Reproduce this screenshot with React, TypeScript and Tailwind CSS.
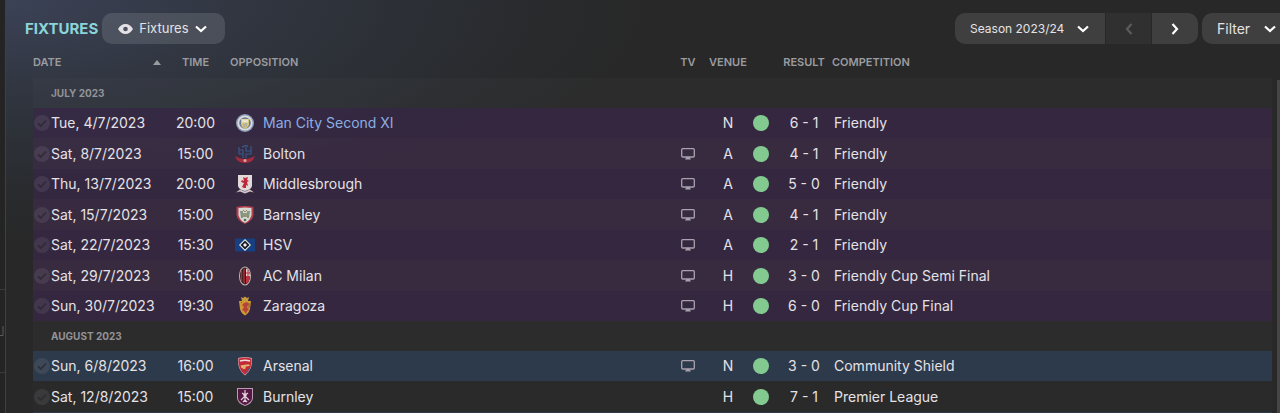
import type { ReactNode } from "react";
import { clsx } from "clsx";

type Fixture = {
  date: string;
  time: string;
  team: string;
  crest: ReactNode;
  tv: boolean;
  venue: "H" | "A" | "N";
  result: string;
  competition: string;
  kind: "friendly" | "cup" | "league";
  own?: boolean;
};

const CRESTS = {
  city: (
    <>
      <circle cx="10" cy="10" r="9" fill="#8e9db4" />
      <circle cx="10" cy="10" r="7.6" fill="#d9dce0" />
      <circle cx="10" cy="10" r="5.8" fill="#6a7a93" />
      <path d="M6 6h8v5q0 3-4 5-4-2-4-5z" fill="#d8c479" />
      <path d="M7 6.5h6v3H7z" fill="#e9e4cd" />
      <path d="M8 12l4-1.5M8 14l4-1.5" stroke="#93a9c4" />
    </>
  ),
  bolton: (
    <>
      <path d="M4 3v7h4V6H4M4 10h5M11 3v4h5V2M16 7v3h-5v4M8 11v3" stroke="#35598c" strokeWidth="1.2" fill="none" />
      <path d="M7 3q3-2 6-1" stroke="#40699d" fill="none" />
      <path d="M0 12l4 2q6 2 12 0l4-2-2 4q-3 3-8 3t-8-3z" fill="#a62c3d" />
      <circle cx="10" cy="16.500" r="1.600" fill="#d9a0a5" />
    </>
  ),
  boro: (
    <>
      <path d="M3 1h14v11q-1 4-7 5-6-1-7-5z" fill="#e2dada" />
      <path d="M8 3l2 1 3-1-1 3 2 1-2 1 1 4-2-1v3H9l-2-1 1-2 1-2-3-1 1-2 2 1z" fill="#bf2738" />
      <path d="M1 18.500l4-3 5 2 5-2 4 3-4-1-5 2-5-2z" fill="#d5c6c9" />
    </>
  ),
  barnsley: (
    <>
      <path d="M1.500 2q8.500-2 17 0v8q-1 6-8.500 9-7.500-3-8.500-9z" fill="#b3404c" />
      <path d="M3.500 3q6.500-1 13 0v7q-1 5-6.500 8-5.500-3-6.500-8z" fill="#d5d8d3" />
      <path d="M5 6h3v7H6zM12 6h3l-1 7h-2z" fill="#84958a" />
      <path d="M8 5l2 2 2-2M6 11h8" stroke="#a88347" fill="none" />
      <path d="M8 8h4v4H8z" fill="#8c9a7c" />
      <circle cx="10" cy="15" r="1.300" fill="#4f6c56" />
    </>
  ),
  hsv: (
    <>
      <path d="M0 3.500h20v13H0z" fill="#173f82" />
      <path d="M10 4l6 6-6 6-6-6z" fill="#f0efe9" />
      <path d="M10 5.500l4.500 4.500-4.500 4.500L5.500 10z" fill="#161b26" />
      <path d="M10 8l2 2-2 2-2-2z" fill="#f0efe9" />
    </>
  ),
  milan: (
    <>
      <ellipse cx="10" cy="10" rx="6" ry="9.500" fill="#c9b9b6" />
      <ellipse cx="10" cy="10" rx="5" ry="8.500" fill="#272025" />
      <path d="M6.500 4.500v11M9 2.500v15" stroke="#ba2733" strokeWidth="1.500" />
      <path d="M11 2.300q4 2 4 7.700h-4z" fill="#e2d8d5" />
      <path d="M11 10h4q0 6-4 7.700z" fill="#b53640" />
      <path d="M13 4v11M11 7h4" stroke="#c22b38" strokeWidth="1" />
    </>
  ),
  zaragoza: (
    <>
      <path d="M6 1l2 1 2-1.500L12 2l2-1-1 4H7z" fill="#c59a3d" />
      <path d="M4 5h12l-1 8q-1 4-5 6.500-4-2.500-5-6.500z" fill="#cf9a35" />
      <path d="M12 6l-3 1-2 2 2 2-2 3 2 1 2 3 1-3 2-1-2-3 2-3z" fill="#b8433a" />
      <path d="M6 6l1 1M14 7v5" stroke="#8d5b2c" />
    </>
  ),
  arsenal: (
    <>
      <path d="M3 2q7-2 14 0 1 12-7 17.500Q2 14 3 2z" fill="#cf9ba0" />
      <path d="M3.700 2.700q6.300-2 12.600 0 1 11-6.300 15.800Q2.700 13 3.700 2.700z" fill="#c32a37" />
      <path d="M5 5q5-1.500 10 0" stroke="#f0dcdc" strokeWidth="1.600" fill="none" />
      <path d="M5.500 9.500l6-1h3V10l-4 .5-1 1.500h-3z" fill="#e3bc7c" />
      <circle cx="9" cy="11.500" r="1.800" fill="#dfb06d" />
      <path d="M14.500 12l-4 5.500" stroke="#4b5d8e" />
    </>
  ),
  burnley: (
    <>
      <path d="M2 1h16v10q0 5-8 8-8-3-8-8z" fill="#b99bb5" />
      <path d="M3 2h14v9q0 4-7 7-7-3-7-7z" fill="#571743" />
      <path d="M10 3v12M7 6l3 2 3-2M6 13l4-4 4 4M8 15l2-2 2 2" stroke="#ddd0da" strokeWidth="1.200" fill="none" />
      <circle cx="10" cy="8" r="1.800" fill="#ddd0da" />
    </>
  ),
};

const MONTHS: { label: string; fixtures: Fixture[] }[] = [
  {
    label: "JULY 2023",
    fixtures: [
      { date: "Tue, 4/7/2023", time: "20:00", team: "Man City Second XI", crest: CRESTS.city, tv: false, venue: "N", result: "6 - 1", competition: "Friendly", kind: "friendly", own: true },
      { date: "Sat, 8/7/2023", time: "15:00", team: "Bolton", crest: CRESTS.bolton, tv: true, venue: "A", result: "4 - 1", competition: "Friendly", kind: "friendly" },
      { date: "Thu, 13/7/2023", time: "20:00", team: "Middlesbrough", crest: CRESTS.boro, tv: true, venue: "A", result: "5 - 0", competition: "Friendly", kind: "friendly" },
      { date: "Sat, 15/7/2023", time: "15:00", team: "Barnsley", crest: CRESTS.barnsley, tv: true, venue: "A", result: "4 - 1", competition: "Friendly", kind: "friendly" },
      { date: "Sat, 22/7/2023", time: "15:30", team: "HSV", crest: CRESTS.hsv, tv: true, venue: "A", result: "2 - 1", competition: "Friendly", kind: "friendly" },
      { date: "Sat, 29/7/2023", time: "15:00", team: "AC Milan", crest: CRESTS.milan, tv: true, venue: "H", result: "3 - 0", competition: "Friendly Cup Semi Final", kind: "friendly" },
      { date: "Sun, 30/7/2023", time: "19:30", team: "Zaragoza", crest: CRESTS.zaragoza, tv: true, venue: "H", result: "6 - 0", competition: "Friendly Cup Final", kind: "friendly" },
    ],
  },
  {
    label: "AUGUST 2023",
    fixtures: [
      { date: "Sun, 6/8/2023", time: "16:00", team: "Arsenal", crest: CRESTS.arsenal, tv: true, venue: "N", result: "3 - 0", competition: "Community Shield", kind: "cup" },
      { date: "Sat, 12/8/2023", time: "15:00", team: "Burnley", crest: CRESTS.burnley, tv: false, venue: "H", result: "7 - 1", competition: "Premier League", kind: "league" },
    ],
  },
];

function Chevron({ className }: { className?: string }) {
  return (
    <svg viewBox="0 0 12 8" className={clsx("h-2 w-3", className)} fill="none" stroke="currentColor" strokeWidth="2.200">
      <path d="M1 1.500l5 4.500 5-4.500" />
    </svg>
  );
}

function Eye() {
  return (
    <svg viewBox="0 0 15 10" className="h-2.5 w-[15px]" fill="currentColor">
      <path fillRule="evenodd" d="M0 5q3-5 7.500-5T15 5q-3 5-7.500 5T0 5zm7.500-2.300a2.300 2.300 0 100 4.600 2.300 2.300 0 000-4.600z" />
    </svg>
  );
}

function Tv() {
  return (
    <svg viewBox="0 0 14 12" className="mx-auto h-3 w-3.5" fill="none" stroke="#a9a3b0" role="img" aria-label="Televised">
      <rect x=".7" y=".7" width="12.600" height="8.300" rx="1" strokeWidth="1.300" />
      <path d="M5.500 9h3l1.500 2.500H4z" fill="#a9a3b0" stroke="none" />
    </svg>
  );
}

function RowCheck({ label }: { label: string }) {
  return (
    <span className="relative mr-px ml-px flex size-4 shrink-0">
      <input type="checkbox" aria-label={label} className="size-4 appearance-none rounded-full bg-white/8" />
      <svg viewBox="0 0 16 16" className="pointer-events-none absolute inset-0" fill="none" stroke="#28252d" strokeOpacity=".7" strokeWidth="1.800">
        <path d="M4 8.300l2.800 2.700L12 5.500" />
      </svg>
    </span>
  );
}

function FixtureRow({ fixture: f, tall }: { fixture: Fixture; tall: boolean }) {
  return (
    <tr
      className={clsx(
        tall ? "h-[31px]" : "h-[30px]",
        f.kind === "friendly" && (tall ? "bg-[#3f2c4a]/70" : "bg-[#392748]/70"),
        f.kind === "cup" && "bg-[#2d3a4b]",
        f.kind === "league" && "bg-white/1"
      )}
    >
      <td>
        <div className="flex items-center">
          <RowCheck label={`Select ${f.team}, ${f.date}`} />
          {f.date}
        </div>
      </td>
      <td className="text-center">{f.time}</td>
      <td className="pl-[5px]">
        <div className="flex items-center gap-2">
          <svg viewBox="0 0 20 20" className="size-5 shrink-0">{f.crest}</svg>
          <span className={clsx(f.own && "text-[#8caee2]")}>{f.team}</span>
        </div>
      </td>
      <td>{f.tv && <Tv />}</td>
      <td className="text-center">{f.venue}</td>
      <td>
        <span role="img" aria-label="Won" className="ml-[3px] block size-4 rounded-full bg-[#82ca90]" />
      </td>
      <td className="pl-1 text-center">{f.result}</td>
      <td className="pl-0.5">{f.competition}</td>
    </tr>
  );
}

export default function App() {
  return (
    <div className="flex h-screen overflow-hidden bg-[#272727] font-['Inter',sans-serif] text-sm text-[#e4e2e6]">
      <aside className="flex w-[5px] shrink-0 flex-col bg-[#242424]">
        <div className="h-[289px]" />
        <div className="flex h-[84px] items-center border-y border-[#3b3b3b]">
          <svg viewBox="0 0 4 10" className="h-2.5 w-1" fill="none" stroke="#5b5b5b">
            <path d="M3 0v9.500H0" />
          </svg>
        </div>
      </aside>

      <main className="flex min-w-0 flex-1 flex-col border-l border-[#3b404d] bg-[radial-gradient(ellipse_640px_240px_at_0_0,#3b4256,#30353f_40%,#292b2e_80%,#282828)]">
        <header className="flex items-center pt-[13px] pb-[3px] pl-[19px]">
          <h1 className="mr-1 text-[15px] font-bold text-[#8bd5d9]">FIXTURES</h1>
          <div className="relative flex items-center">
            <span className="pointer-events-none absolute left-4">
              <Eye />
            </span>
            <select aria-label="View" className="h-[31px] w-[123px] appearance-none rounded-[10px] bg-white/12 pl-[37px] text-[13px]">
              <option>Fixtures</option>
            </select>
            <Chevron className="pointer-events-none absolute right-[18px] text-white" />
          </div>

          <div className="ml-auto flex gap-px overflow-hidden rounded-[10px]">
            <div className="relative flex items-center">
              <select aria-label="Season" className="h-[31px] w-[150px] appearance-none bg-white/11 pl-[15px] text-xs">
                <option>Season 2023/24</option>
              </select>
              <Chevron className="pointer-events-none absolute right-4 text-white" />
            </div>
            <button aria-label="Previous season" disabled className="flex h-[31px] w-[45px] items-center justify-center bg-white/4 text-[#5b5b5b]">
              <Chevron className="rotate-90" />
            </button>
            <button aria-label="Next season" className="flex h-[31px] w-[46px] items-center justify-center bg-white/11 text-white">
              <Chevron className="-rotate-90" />
            </button>
          </div>
          <button className="ml-1 flex h-[31px] w-[78px] items-center justify-between rounded-l-[10px] bg-white/11 pr-1 pl-[15px]">
            Filter
            <Chevron className="text-white" />
          </button>
        </header>

        <div className="flex flex-1 pl-[27px]">
          <table className="w-full table-fixed self-start text-left whitespace-nowrap">
            <colgroup>
              <col className="w-32" />
              <col className="w-[69px]" />
              <col />
              <col className="w-9" />
              <col className="w-11" />
              <col className="w-[22px]" />
              <col className="w-[60px]" />
              <col />
            </colgroup>
            <thead>
              <tr className="h-[31px] text-[11px] text-[#9b9ca0]">
                <th scope="col" aria-sort="ascending" className="font-semibold">
                  <button className="flex w-full items-center justify-between">
                    DATE
                    <svg viewBox="0 0 8 5" className="h-[5px] w-2" fill="currentColor">
                      <path d="M4 0l4 5H0z" />
                    </svg>
                  </button>
                </th>
                <th scope="col" className="text-center font-semibold">TIME</th>
                <th scope="col" className="font-semibold">OPPOSITION</th>
                <th scope="col" className="text-center font-semibold">TV</th>
                <th scope="col" className="text-center font-semibold">VENUE</th>
                <td />
                <th scope="col" className="pl-1 text-center font-semibold">RESULT</th>
                <th scope="col" className="font-semibold">COMPETITION</th>
              </tr>
            </thead>
            {MONTHS.map((month) => (
              <tbody key={month.label}>
                <tr className="h-[30px] bg-white/2 text-[10px] text-[#929397]">
                  <th colSpan={8} className="pl-[18px] font-bold">{month.label}</th>
                </tr>
                {month.fixtures.map((fixture, i) => (
                  <FixtureRow key={fixture.date} fixture={fixture} tall={i % 2 === 1} />
                ))}
              </tbody>
            ))}
            <tfoot>
              <tr className="h-[30px] bg-[#2d3a4b]">
                <td colSpan={8} />
              </tr>
            </tfoot>
          </table>
          <div className="mt-[33px] ml-[5px] w-[3px] shrink-0 bg-[#474543]" />
        </div>
      </main>
    </div>
  );
}
